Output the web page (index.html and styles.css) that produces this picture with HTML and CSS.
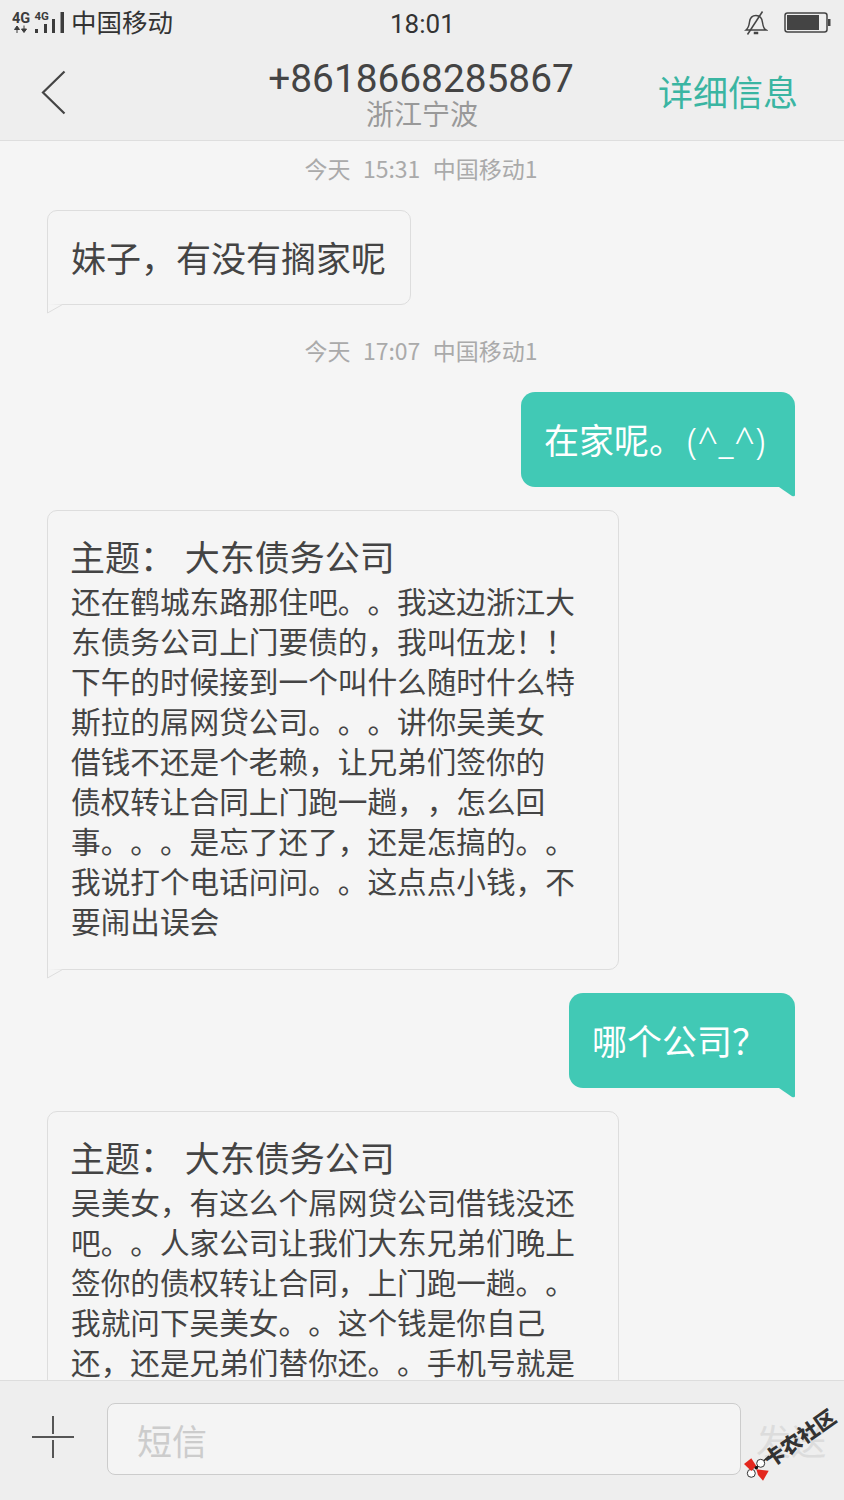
FILE: index.html
```html
<!DOCTYPE html>
<html lang="zh-CN">
<head>
<meta charset="utf-8">
<title>短信</title>
<link rel="stylesheet" href="styles.css">
</head>
<body>
<div class="phone">
  <header class="topbar">
    <div class="status">
      <div class="status-left">
        <svg class="signal" width="54" height="30" viewBox="0 -6 54 30">
          <text x="0" y="11" class="net">4G</text>
          <text x="22.500" y="8" class="net net-small">4G</text>
          <path d="M5 21v-5.500M2.500 17.500L5 14l2.500 3.500z" class="arrow"/>
          <path d="M12 13.500V19M9.500 17L12 20.500 14.500 17z" class="arrow"/>
          <rect x="23" y="17" width="3" height="4" class="bar"/>
          <rect x="32" y="12" width="3" height="9" class="bar"/>
          <rect x="40" y="7" width="3" height="14" class="bar"/>
          <rect x="48.500" y="0" width="3.500" height="21" class="bar"/>
        </svg>
        <span class="carrier">中国移动</span>
      </div>
      <span class="clock">18:01</span>
      <div class="status-right">
        <svg width="24" height="24" viewBox="0 0 24 24" class="bell">
          <path d="M2 19c2.500-2 3-4 3.500-8C6 7 8.500 4.500 12 4.500s6 2.500 6.500 7c.5 4 1 6 3.500 7.500z"/>
          <path d="M10.500 21.500h3v1h-3z"/>
          <path d="M3.500 23.500L18.500 0.500"/>
        </svg>
        <svg width="47" height="22" viewBox="0 0 47 22" class="battery">
          <rect x="1" y="1" width="42" height="19" rx="2.500" class="batt-shell"/>
          <rect x="3" y="3" width="32" height="15" class="batt-fill"/>
          <rect x="44" y="7" width="2.500" height="7" class="batt-fill"/>
        </svg>
      </div>
    </div>
    <div class="navbar">
      <svg class="back" width="26" height="46" viewBox="0 0 26 46"><path d="M23.500 1.500L2 22.500l21.500 21"/></svg>
      <div class="contact">
        <div class="number">+8618668285867</div>
        <div class="place">浙江宁波</div>
      </div>
      <span class="details">详细信息</span>
    </div>
  </header>

  <main class="thread">
    <div class="stamp stamp-first">今天&nbsp; 15:31&nbsp; 中国移动1</div>
    <div class="bubble in short">
      妹子，有没有搁家呢
      <svg class="tail tail-in" width="17" height="10" viewBox="0 0 17 10"><path d="M0.500 0V9L15.500 0.500" /></svg>
    </div>

    <div class="stamp">今天&nbsp; 17:07&nbsp; 中国移动1</div>
    <div class="bubble out first-out">
      在家呢。<span class="latin">(^_^)</span>
      <svg class="tail tail-out" width="16" height="10" viewBox="0 0 16 10"><path d="M0 0H16V8Q16 10 13 9z"/></svg>
    </div>

    <div class="bubble in long">
      <div class="subject">主题： 大东债务公司</div>
      <div class="body">还在鹤城东路那住吧。。我这边浙江大<br>东债务公司上门要债的，我叫伍龙！！<br>下午的时候接到一个叫什么随时什么特<br>斯拉的屌网贷公司。。。讲你吴美女<br>借钱不还是个老赖，让兄弟们签你的<br>债权转让合同上门跑一趟，，怎么回<br>事。。。是忘了还了，还是怎搞的。。<br>我说打个电话问问。。这点点小钱，不<br>要闹出误会</div>
      <svg class="tail tail-in" width="17" height="10" viewBox="0 0 17 10"><path d="M0.500 0V9L15.500 0.500" /></svg>
    </div>

    <div class="bubble out second-out">
      哪个公司<span class="qmark">？</span>
      <svg class="tail tail-out" width="16" height="10" viewBox="0 0 16 10"><path d="M0 0H16V8Q16 10 13 9z"/></svg>
    </div>

    <div class="bubble in long">
      <div class="subject">主题： 大东债务公司</div>
      <div class="body">吴美女，有这么个屌网贷公司借钱没还<br>吧。。人家公司让我们大东兄弟们晚上<br>签你的债权转让合同，上门跑一趟。。<br>我就问下吴美女。。这个钱是你自己<br>还，还是兄弟们替你还。。手机号就是</div>
    </div>
  </main>

  <footer class="composer">
    <svg class="plus" width="42" height="42" viewBox="0 0 42 42"><path d="M0 21H42M21 0V18M21 24V42"/></svg>
    <div class="field">短信</div>
    <span class="send">发送</span>
  </footer>

  <svg class="bow" width="28" height="30" viewBox="0 0 28 30">
    <path d="M12 13L25 1" class="bow-line"/>
    <circle cx="16.700" cy="8.300" r="4" class="bow-white"/>
    <circle cx="7.300" cy="18.300" r="4" class="bow-white"/>
    <path d="M0 9L7.300 3.300 12.300 11 7.300 16z" class="bow-red"/>
    <path d="M12.300 14.300L24.700 15.700 19 25.700 14 20z" class="bow-red"/>
    <circle cx="12.300" cy="12.800" r="1.800" class="bow-knot"/>
  </svg>
  <span class="mark-text">卡农社区</span>
</div>
</body>
</html>
```
FILE: styles.css
```css
* { box-sizing: border-box; }
html, body { margin: 0; padding: 0; }
body {
  font-family: "Noto Sans CJK SC", "Noto Sans", sans-serif;
  background: #f5f5f5;
  text-spacing-trim: space-all;
  font-feature-settings: "chws" 0, "halt" 0, "palt" 0;
}
.phone {
  position: relative;
  width: 844px;
  height: 1500px;
  display: flex;
  flex-direction: column;
  overflow: hidden;
  background: #f5f5f5;
}
.topbar {
  flex: none;
  height: 141px;
  background: #eeeeee;
  border-bottom: 1px solid #dedede;
}
.status {
  height: 46px;
  padding: 0 13px 0 12px;
  display: flex;
  align-items: center;
  justify-content: space-between;
  position: relative;
}
.status-left { display: flex; align-items: center; gap: 5px; }
.signal { display: block; margin-top: -4px; }
.net { font-family: "Roboto", sans-serif; font-size: 14.500px; font-weight: 700; fill: #3c3c3c; }
.net-small { font-size: 11.500px; }
.arrow { fill: #3c3c3c; stroke: #3c3c3c; stroke-width: 1; }
.bar { fill: #3c3c3c; }
.carrier { font-size: 25.500px; line-height: 46px; color: #333; margin-top: -4px; }
.clock {
  position: absolute;
  left: 390px;
  top: 1px;
  font-family: "Roboto", sans-serif;
  font-size: 26px;
  line-height: 46px;
  color: #333;
}
.status-right { display: flex; align-items: center; gap: 16px; }
.bell { fill: none; stroke: #444; stroke-width: 1.500; }
.batt-shell { fill: none; stroke: #444; stroke-width: 1.500; }
.batt-fill { fill: #444; }
.navbar {
  height: 94px;
  padding: 0 47px 0 41px;
  display: flex;
  align-items: center;
  position: relative;
}
.back { fill: none; stroke: #444; stroke-width: 2.200; }
.contact {
  position: absolute;
  left: 0;
  right: 2px;
  top: 14px;
  text-align: center;
}
.number {
  font-family: "Roboto", sans-serif;
  font-size: 38.800px;
  line-height: 38px;
  color: #444;
}
.place { font-size: 28px; line-height: 30px; color: #999; margin-right: -2px; }
.details {
  margin-left: auto;
  margin-right: -1px;
  margin-top: -4px;
  font-size: 35px;
  color: #3ab5a2;
  line-height: 46px;
}
.thread {
  flex: 1;
  min-height: 0;
  overflow: hidden;
  padding: 0 49px 0 47px;
  display: flex;
  flex-direction: column;
  align-items: flex-start;
}
.stamp {
  align-self: center;
  font-size: 23px;
  line-height: 30px;
  word-spacing: 1px;
  color: #aaaaaa;
  margin: 30px 0 27px;
}
.stamp-first { margin: 12px 0 27px; }
.bubble { position: relative; flex: none; font-size: 35px; color: #444; }
.bubble.in {
  background: #f5f5f5;
  border: 1px solid #dddddd;
  border-radius: 10px 10px 10px 0;
}
.short {
  width: 364px;
  height: 95px;
  padding: 0 23px;
  line-height: 92px;
  white-space: nowrap;
}
.long {
  width: 572px;
  padding: 21px 22px 28px 23px;
  margin-top: 23px;
}
.subject { line-height: 48px; margin: 0 0 1px -1px; white-space: pre; word-spacing: 2px; }
.body { font-size: 29.650px; line-height: 40px; white-space: nowrap; }
.bubble.out {
  align-self: flex-end;
  background: #41c9b5;
  color: #ffffff;
  border-radius: 14px 14px 0 14px;
  padding: 0 23px;
  height: 95px;
  line-height: 93px;
  white-space: nowrap;
}
.first-out { width: 274px; }
.second-out { width: 226px; height: 94px; margin-top: 23px; }
.latin { font-family: "Noto Sans", sans-serif; font-weight: 300; font-size: 36px; letter-spacing: 0.500px; margin-left: 3px; }
.qmark { font-family: "Noto Sans CJK TC", sans-serif; }
.tail { position: absolute; top: 100%; display: block; }
.tail-in { left: -1px; fill: #f5f5f5; stroke: #dddddd; stroke-width: 1; }
.tail-out { right: 0; fill: #41c9b5; }
.composer {
  position: absolute;
  left: 0;
  right: 0;
  bottom: 0;
  height: 120px;
  background: #eeeeee;
  border-top: 1px solid #dddddd;
  display: flex;
  align-items: center;
  padding: 0 16px 3px 32px;
}
.plus { fill: none; stroke: #555; stroke-width: 2; flex: none; margin-bottom: 5px; }
.field {
  width: 634px;
  height: 72px;
  margin-left: 33px;
  background: #f4f4f4;
  border: 1px solid #cccccc;
  border-radius: 8px;
  padding-left: 29px;
  font-size: 35px;
  line-height: 72px;
  color: #cccccc;
}
.send { margin-left: 15px; font-size: 35px; color: #dcdcdc; }
.bow { position: absolute; left: 744px; top: 1455px; }
.bow-red { fill: #e3271e; }
.bow-white { fill: #fff; stroke: #333; stroke-width: 1; }
.bow-knot { fill: #111; }
.bow-line { stroke: #222; stroke-width: 1.500; }
.mark-text {
  position: absolute;
  left: 758px;
  top: 1422px;
  font-size: 20.500px;
  font-weight: 900;
  line-height: 30px;
  color: #333;
  white-space: nowrap;
  transform: rotate(-35deg);
}
```
